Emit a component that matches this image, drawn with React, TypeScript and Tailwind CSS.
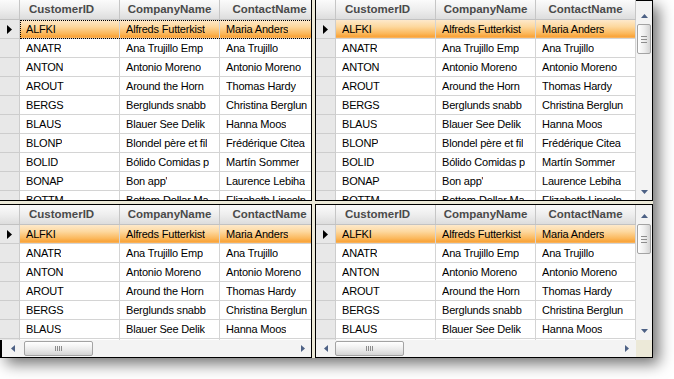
import React from "react";

type Rec = [string, string, string];

// texts as the grid shows them (cells clip at the column edge)
const data: Rec[] = [
  ["ALFKI", "Alfreds Futterkist", "Maria Anders"],
  ["ANATR", "Ana Trujillo Emp", "Ana Trujillo"],
  ["ANTON", "Antonio Moreno", "Antonio Moreno"],
  ["AROUT", "Around the Horn", "Thomas Hardy"],
  ["BERGS", "Berglunds snabb", "Christina Berglun"],
  ["BLAUS", "Blauer See Delik", "Hanna Moos"],
  ["BLONP", "Blondel père et fil", "Frédérique Citea"],
  ["BOLID", "Bólido Comidas p", "Martín Sommer"],
  ["BONAP", "Bon app'", "Laurence Lebiha"],
  ["BOTTM", "Bottom-Dollar Ma", "Elizabeth Lincoln"],
];

function Arrow({ dir }: { dir: "up" | "down" | "left" | "right" }) {
  const d = {
    up: "M0 4L3.5 0L7 4Z",
    down: "M0 0L7 0L3.5 4Z",
    left: "M4 0L4 7L0 3.5Z",
    right: "M0 0L4 3.5L0 7Z",
  }[dir];
  const v = dir === "up" || dir === "down";
  return (
    <svg width={v ? 7 : 4} height={v ? 4 : 7} viewBox={v ? "0 0 7 4" : "0 0 4 7"}>
      <path d={d} fill="#4d6185" />
    </svg>
  );
}

function VThumb() {
  return (
    <div className="mx-[1px] h-[30px] shrink-0 rounded-[2px] border border-[#a3a3a3] bg-[linear-gradient(to_right,#ffffff,#ececec_55%,#d4d4d4)] flex flex-col items-center justify-center gap-[2px]">
      <div className="w-[6px] h-px bg-[#8c8c8c]" />
      <div className="w-[6px] h-px bg-[#8c8c8c]" />
      <div className="w-[6px] h-px bg-[#8c8c8c]" />
    </div>
  );
}

function HThumb() {
  return (
    <div className="w-[69px] h-[15px] shrink-0 rounded-[2px] border border-[#a3a3a3] bg-[linear-gradient(to_bottom,#ffffff,#ececec_55%,#d4d4d4)] flex items-center justify-center gap-px">
      <div className="w-px h-[5px] bg-[#8c8c8c]" />
      <div className="w-px h-[5px] bg-[#8c8c8c]" />
      <div className="w-px h-[5px] bg-[#8c8c8c]" />
      <div className="w-px h-[5px] bg-[#8c8c8c]" />
    </div>
  );
}

function Cell({ text }: { text: string }) {
  return (
    <div className="w-[100px] shrink-0 h-full border-r border-b border-[#d4d4d4] pl-[6px] pr-[2px] flex items-center">
      <span className="block overflow-hidden whitespace-nowrap">{text}</span>
    </div>
  );
}

function Row({ r, sel, focus }: { r: Rec; sel: boolean; focus?: boolean }) {
  return (
    <div className="flex h-[19px]">
      <div className="w-[20px] shrink-0 h-full bg-[#e8e8e8] border-r border-b border-[#cdcdcd] flex items-center pl-[7px]">
        {sel ? (
          <svg width="5" height="9" viewBox="0 0 5 9">
            <path d="M0 0L5 4.5L0 9Z" fill="#000" />
          </svg>
        ) : null}
      </div>
      <div
        className={
          "flex h-full " +
          (sel ? "bg-[linear-gradient(to_bottom,#fee9cb,#fdd89e_35%,#fbb75a_72%,#f9a43a_86%,#fcc27c)] " : "bg-white ") +
          (focus ? "outline-1 outline-dotted outline-black -outline-offset-1" : "")
        }
      >
        <Cell text={r[0]} />
        <Cell text={r[1]} />
        <Cell text={r[2]} />
      </div>
    </div>
  );
}

function Table({ rows, focus }: { rows: number; focus?: boolean }) {
  const head = "w-[100px] shrink-0 h-full border-r border-[#c6c6c6] flex items-center whitespace-nowrap";
  return (
    <div className="flex-1 min-w-0 min-h-0 overflow-hidden bg-white">
      <div className="w-[320px] text-[11px] tracking-[-0.2px] text-black">
        <div className="flex h-[20px] border-b border-[#c2c2c2] bg-[linear-gradient(to_bottom,#fbfbfb,#eeeeee_50%,#dddddd)] text-[11.5px] tracking-normal font-bold text-[#4a4a4a]">
          <div className="w-[20px] shrink-0 h-full border-r border-[#c6c6c6]" />
          <div className={head + " pl-[9px]"}>CustomerID</div>
          <div className={head + " justify-center"}>CompanyName</div>
          <div className={head + " justify-center"}>ContactName</div>
        </div>
        {data.slice(0, rows).map((r, i) => (
          <Row key={r[0]} r={r} sel={i === 0} focus={focus && i === 0} />
        ))}
      </div>
    </div>
  );
}

function TopVBar() {
  return (
    <div className="w-[16px] shrink-0 h-full bg-[#f3f3f3] border-t border-black flex flex-col">
      <div className="h-[22px] shrink-0 flex items-end justify-center pb-[5px]">
        <Arrow dir="up" />
      </div>
      <div className="mt-[1px]">
        <VThumb />
      </div>
      <div className="flex-1" />
      <div className="h-[17px] shrink-0 flex items-center justify-center">
        <Arrow dir="down" />
      </div>
    </div>
  );
}

function BottomVBar() {
  return (
    <div className="w-[16px] shrink-0 h-full bg-[#f3f3f3] flex flex-col">
      <div className="h-[19px] shrink-0 flex items-center justify-center pt-[2px]">
        <Arrow dir="up" />
      </div>
      <VThumb />
      <div className="flex-1" />
      <div className="h-[19px] shrink-0 flex items-center justify-center">
        <Arrow dir="down" />
      </div>
    </div>
  );
}

export default function App() {
  return (
    <div className="min-h-screen bg-white font-['Liberation_Sans',Arial,sans-serif]">
      <div className="w-[653px] h-[358px] bg-[#ece9d8] shadow-[6px_6px_14px_rgba(0,0,0,0.55)] grid grid-cols-[312px_3px_338px] grid-rows-[201px_3px_154px]">
        {/* top left */}
        <div className="border-r border-b border-black flex overflow-hidden">
          <Table rows={10} focus />
        </div>
        <div />
        {/* top right */}
        <div className="border-l border-r border-b border-black flex overflow-hidden">
          <Table rows={10} />
          <TopVBar />
        </div>

        <div />
        <div />
        <div />

        {/* bottom left */}
        <div className="border-t border-r border-b border-black flex flex-col overflow-hidden">
          <Table rows={7} />
          <div className="h-[17px] shrink-0 bg-[#f3f3f3] border-l-2 border-black flex items-center">
            <div className="w-[22px] shrink-0 flex items-center pl-[9px]">
              <Arrow dir="left" />
            </div>
            <HThumb />
            <div className="flex-1" />
            <div className="w-[16px] shrink-0 flex items-center justify-center">
              <Arrow dir="right" />
            </div>
          </div>
        </div>
        <div />
        {/* bottom right */}
        <div className="border border-black flex flex-col overflow-hidden">
          <div className="flex-1 min-h-0 flex">
            <Table rows={7} />
            <BottomVBar />
          </div>
          <div className="h-[17px] shrink-0 flex">
            <div className="flex-1 bg-[#f3f3f3] flex items-center">
              <div className="w-[19px] shrink-0 flex items-center justify-center">
                <Arrow dir="left" />
              </div>
              <HThumb />
              <div className="flex-1" />
              <div className="w-[19px] shrink-0 flex items-center justify-center">
                <Arrow dir="right" />
              </div>
            </div>
            <div className="w-[16px] shrink-0 bg-[#ece9d8]" />
          </div>
        </div>
      </div>
    </div>
  );
}
